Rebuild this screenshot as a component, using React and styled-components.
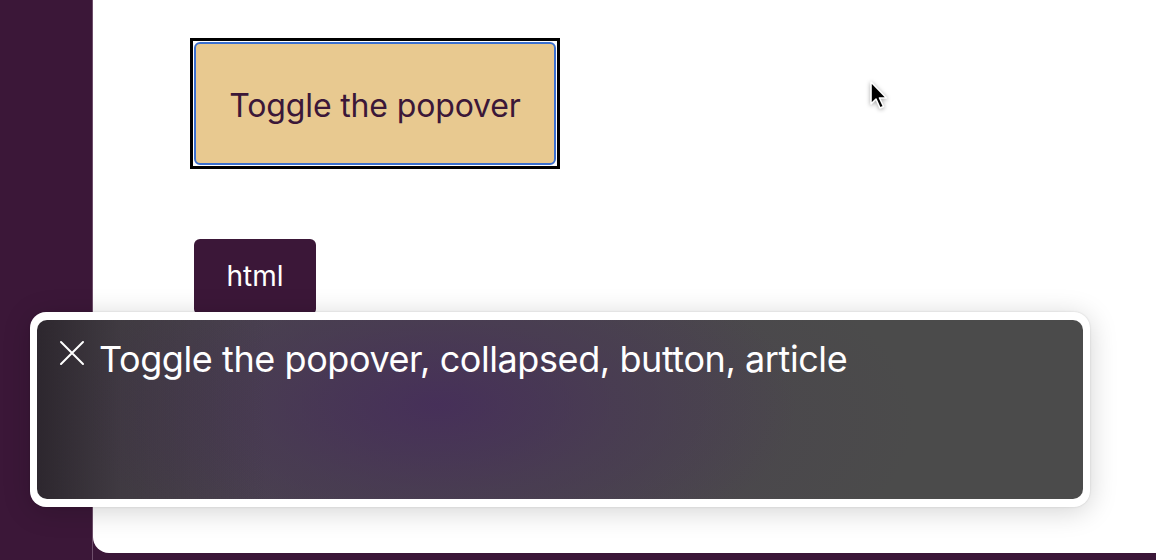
import React from "react";
import styled, { createGlobalStyle } from "styled-components";

const Global = createGlobalStyle`
  html, body { margin: 0; padding: 0; }
  body {
    width: 1156px;
    height: 560px;
    overflow: hidden;
    background: #3b1738;
    font-family: Inter, "Liberation Sans", sans-serif;
  }
`;

const Screen = styled.div`
  position: relative;
  display: flex;
  width: 1156px;
  height: 560px;
  background: #3b1738;
`;

const Sidebar = styled.div`
  width: 93px;
  flex: none;
  border-right: 1px solid #6e4f6b;
  box-sizing: border-box;
`;

const Panel = styled.main`
  flex: 1;
  height: 553px;
  background: #ffffff;
  border-bottom-left-radius: 16px;
  box-sizing: border-box;
  padding: 38px 0 0 97px;
  display: flex;
  flex-direction: column;
  align-items: flex-start;
  gap: 70px;
`;

const FocusRing = styled.div`
  border: 3px solid #000;
  padding: 1px;
  background: #fff;
`;

const ToggleButton = styled.button`
  width: 362px;
  height: 123px;
  box-sizing: border-box;
  background: #e8c990;
  border: 2px solid #3a6fcf;
  border-radius: 6px;
  color: #3b1738;
  font-family: Inter, "Liberation Sans", sans-serif;
  font-size: 32px;
  letter-spacing: -0.15px;
  display: flex;
  align-items: center;
  justify-content: center;
  padding: 3px 0 0 0;
`;

const Tag = styled.div`
  width: 122px;
  height: 76px;
  margin-left: 4px;
  box-sizing: border-box;
  background: #3b1738;
  color: #fff;
  border-radius: 6px;
  font-size: 28px;
  display: flex;
  justify-content: center;
  padding-top: 20px;
`;

const Popover = styled.div`
  position: absolute;
  left: 30px;
  top: 312px;
  width: 1060px;
  height: 195px;
  box-sizing: border-box;
  padding: 8px 7px;
  background: #fff;
  border-radius: 16px;
  box-shadow: 0 4px 28px rgba(0, 0, 0, 0.18), 0 0 2px rgba(0, 0, 0, 0.15);
`;

const Caption = styled.div`
  height: 100%;
  border-radius: 10px;
  box-sizing: border-box;
  padding: 19px 0 0 22px;
  display: flex;
  align-items: flex-start;
  gap: 14px;
  background:
    linear-gradient(to right, rgba(35, 28, 36, 0.75) 0%, rgba(40, 32, 40, 0.3) 8%, rgba(60, 50, 60, 0) 22%),
    radial-gradient(ellipse 360px 170px at 400px 85px, rgba(70, 46, 90, 0.9) 0%, rgba(72, 54, 86, 0.55) 50%, rgba(75, 75, 75, 0) 100%),
    radial-gradient(ellipse 560px 230px at 320px 100px, rgba(72, 58, 80, 0.7) 0%, rgba(75, 75, 75, 0) 100%),
    #4b4b4b;
`;

const CloseIcon = styled.svg`
  flex: none;
  margin-top: 1px;
`;

const CaptionText = styled.div`
  color: #fff;
  font-size: 36px;
  line-height: 42px;
  letter-spacing: -0.42px;
  margin-top: -1px;
`;

const Cursor = styled.svg`
  position: absolute;
  left: 868px;
  top: 80px;
  filter: drop-shadow(0 1px 2px rgba(0, 0, 0, 0.35));
`;

export default function App() {
  return (
    <>
      <Global />
      <Screen>
        <Sidebar />
        <Panel>
          <FocusRing>
            <ToggleButton>Toggle the popover</ToggleButton>
          </FocusRing>
          <Tag>html</Tag>
        </Panel>
        <Popover>
          <Caption>
            <CloseIcon width="26" height="26" viewBox="0 0 26 26">
              <path d="M2 2 L24 24 M24 2 L2 24" stroke="#fff" strokeWidth="2" strokeLinecap="round" />
            </CloseIcon>
            <CaptionText>Toggle the popover, collapsed, button, article</CaptionText>
          </Caption>
        </Popover>
        <Cursor width="22" height="30" viewBox="0 0 22 30">
          <path
            d="M3 2 L3 24 L8 19 L12 28 L15.5 26.5 L11.5 18 L18.5 18 Z"
            fill="#000"
            stroke="#fff"
            strokeWidth="1.6"
            strokeLinejoin="round"
          />
        </Cursor>
      </Screen>
    </>
  );
}
